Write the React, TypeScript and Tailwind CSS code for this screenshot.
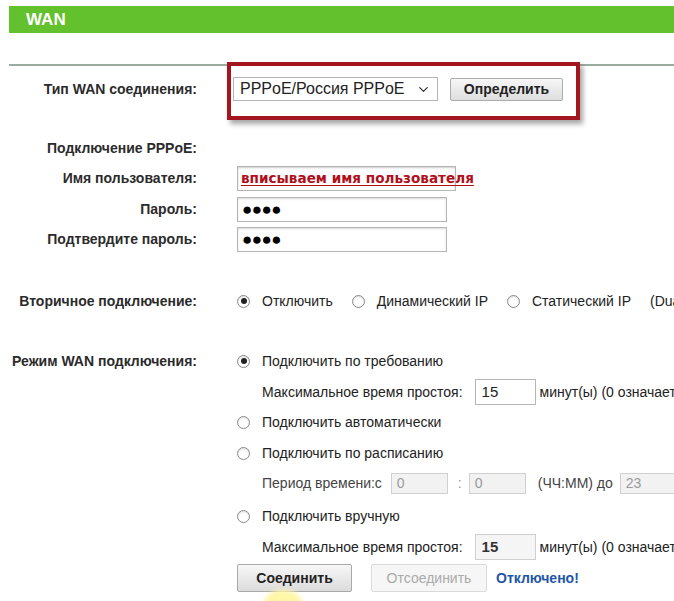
import { ChevronDown } from 'lucide-react'

const Label = ({ children }: { children: React.ReactNode }) => (
  <div className="w-[197px] shrink-0 text-right font-bold text-[14px] text-[#2b2b2b]">{children}</div>
)

const Radio = ({ checked }: { checked?: boolean }) => (
  <span className="w-[13px] h-[13px] shrink-0 rounded-full border border-[#8a8a8a] bg-white flex items-center justify-center shadow-[inset_0_1px_2px_rgba(0,0,0,0.15)]">
    {checked && <span className="w-[6px] h-[6px] rounded-full bg-[#222]" />}
  </span>
)

const Choice = ({ checked, children }: { checked?: boolean; children: React.ReactNode }) => (
  <div className="flex items-center gap-[12px]">
    <Radio checked={checked} />
    <span>{children}</span>
  </div>
)

export default function App() {
  return (
    <div className="relative w-[674px] h-[601px] overflow-hidden bg-white text-[14px] text-[#222] font-['Liberation_Sans',Arial,sans-serif]">
      <div className="pt-[6px] pl-[9px]">
        <div className="h-[27px] bg-[#62c12c] flex items-center pl-[17px] text-white font-bold text-[17px]">WAN</div>
        <div className="mt-[31px] h-[2px] bg-[#9aaba2]" />
      </div>

      {/* Тип WAN */}
      <div className="mt-[11px] flex items-center h-[24px]">
        <Label>Тип WAN соединения:</Label>
        <div className="ml-[36px] w-[205px] h-[24px] border border-[#b5b5b5] bg-white flex items-center justify-between pl-[6px] pr-[6px] text-[16px] text-[#222]">
          <span>PPPoE/Россия PPPoE</span>
          <ChevronDown size={15} strokeWidth={2} className="text-[#333]" />
        </div>
        <button className="ml-[12px] w-[113px] h-[23px] border border-[#acacac] rounded-[2px] bg-gradient-to-b from-[#f6f6f6] to-[#dedede] text-[14px] font-bold text-[#222]">
          Определить
        </button>
      </div>

      <div className="absolute left-[227px] top-[62px] w-[353px] h-[58px] border-[4px] border-[#a3151f] shadow-[3px_4px_5px_rgba(0,0,0,0.35)]" />

      {/* PPPoE */}
      <div className="mt-[37px] flex items-center h-[20px]">
        <Label>Подключение PPPoE:</Label>
      </div>

      <div className="mt-[8px] flex items-center h-[25px]">
        <Label>Имя пользователя:</Label>
        <div className="ml-[40px] w-[219px] h-[25px] border border-[#b5b5b5] shadow-[inset_0_1px_2px_rgba(0,0,0,0.2)] flex items-center pl-[3px] overflow-visible whitespace-nowrap">
          <span className="font-['DejaVu_Sans',sans-serif] font-bold text-[13.6px] text-[#b0101a] underline underline-offset-2">вписываем имя пользователя</span>
        </div>
      </div>

      <div className="mt-[6px] flex items-center h-[25px]">
        <Label>Пароль:</Label>
        <div className="ml-[40px] w-[210px] h-[25px] border border-[#b5b5b5] shadow-[inset_0_1px_2px_rgba(0,0,0,0.15)] flex items-center pl-[4px] text-[17px] tracking-[-0.5px] text-black">
          ●●●●
        </div>
      </div>

      <div className="mt-[5px] flex items-center h-[25px]">
        <Label>Подтвердите пароль:</Label>
        <div className="ml-[40px] w-[210px] h-[25px] border border-[#b5b5b5] shadow-[inset_0_1px_2px_rgba(0,0,0,0.15)] flex items-center pl-[4px] text-[17px] tracking-[-0.5px] text-black">
          ●●●●
        </div>
      </div>

      {/* Вторичное */}
      <div className="mt-[39px] flex items-center h-[20px] whitespace-nowrap">
        <Label>Вторичное подключение:</Label>
        <div className="ml-[40px] flex items-center gap-[19px]">
          <Choice checked>Отключить</Choice>
          <Choice>Динамический IP</Choice>
          <Choice>Статический IP</Choice>
          <span>(Dua</span>
        </div>
      </div>

      {/* Режим WAN */}
      <div className="mt-[40px] flex items-start whitespace-nowrap">
        <Label>Режим WAN подключения:</Label>
        <div className="ml-[40px] flex flex-col">
          <div className="h-[20px] flex items-center">
            <Choice checked>Подключить по требованию</Choice>
          </div>
          <div className="mt-[8px] h-[26px] flex items-center pl-[25px]">
            <span>Максимальное время простоя:</span>
            <div className="ml-[12px] w-[61px] h-[26px] border border-[#b5b5b5] flex items-center pl-[6px] text-[15px]">15</div>
            <span className="ml-[4px]">минут(ы) (0 означает</span>
          </div>
          <div className="mt-[7px] h-[20px] flex items-center">
            <Choice>Подключить автоматически</Choice>
          </div>
          <div className="mt-[11px] h-[20px] flex items-center">
            <Choice>Подключить по расписанию</Choice>
          </div>
          <div className="mt-[9px] h-[22px] flex items-center pl-[25px] text-[#444]">
            <span>Период времени:с</span>
            <div className="ml-[9px] w-[57px] h-[21px] border border-[#d0d0d0] bg-[#f2f2f2] flex items-center pl-[5px] text-[#9a9a9a]">0</div>
            <span className="ml-[10px] text-[#999]">:</span>
            <div className="ml-[7px] w-[57px] h-[21px] border border-[#d0d0d0] bg-[#f2f2f2] flex items-center pl-[5px] text-[#9a9a9a]">0</div>
            <span className="ml-[12px]">(ЧЧ:ММ) до</span>
            <div className="ml-[7px] w-[60px] h-[21px] border border-[#d0d0d0] bg-[#f2f2f2] flex items-center pl-[5px] text-[#9a9a9a]">23</div>
          </div>
          <div className="mt-[12px] h-[20px] flex items-center">
            <Choice>Подключить вручную</Choice>
          </div>
          <div className="mt-[8px] h-[26px] flex items-center pl-[25px]">
            <span>Максимальное время простоя:</span>
            <div className="ml-[12px] w-[61px] h-[26px] border border-[#cfcfcf] bg-[#f5f5f5] flex items-center pl-[6px] text-[15px] font-bold text-[#333]">15</div>
            <span className="ml-[4px]">минут(ы) (0 означает</span>
          </div>
          <div className="mt-[4px] h-[28px] flex items-center">
            <button className="w-[115px] h-[28px] border border-[#a9a9a9] rounded-[2px] bg-gradient-to-b from-[#f7f7f7] to-[#dcdcdc] font-bold text-[14px] text-[#222]">
              Соединить
            </button>
            <button className="ml-[19px] w-[116px] h-[28px] border border-[#dadada] rounded-[2px] bg-[#f6f6f6] text-[14px] text-[#aaa]">
              Отсоединить
            </button>
            <span className="ml-[9px] font-bold text-[#1f56a8]">Отключено!</span>
          </div>
        </div>
      </div>

      <div className="absolute left-[262px] top-[590px] w-[42px] h-[40px] rounded-full bg-[#fff6a6] blur-[2px]" />
    </div>
  )
}
